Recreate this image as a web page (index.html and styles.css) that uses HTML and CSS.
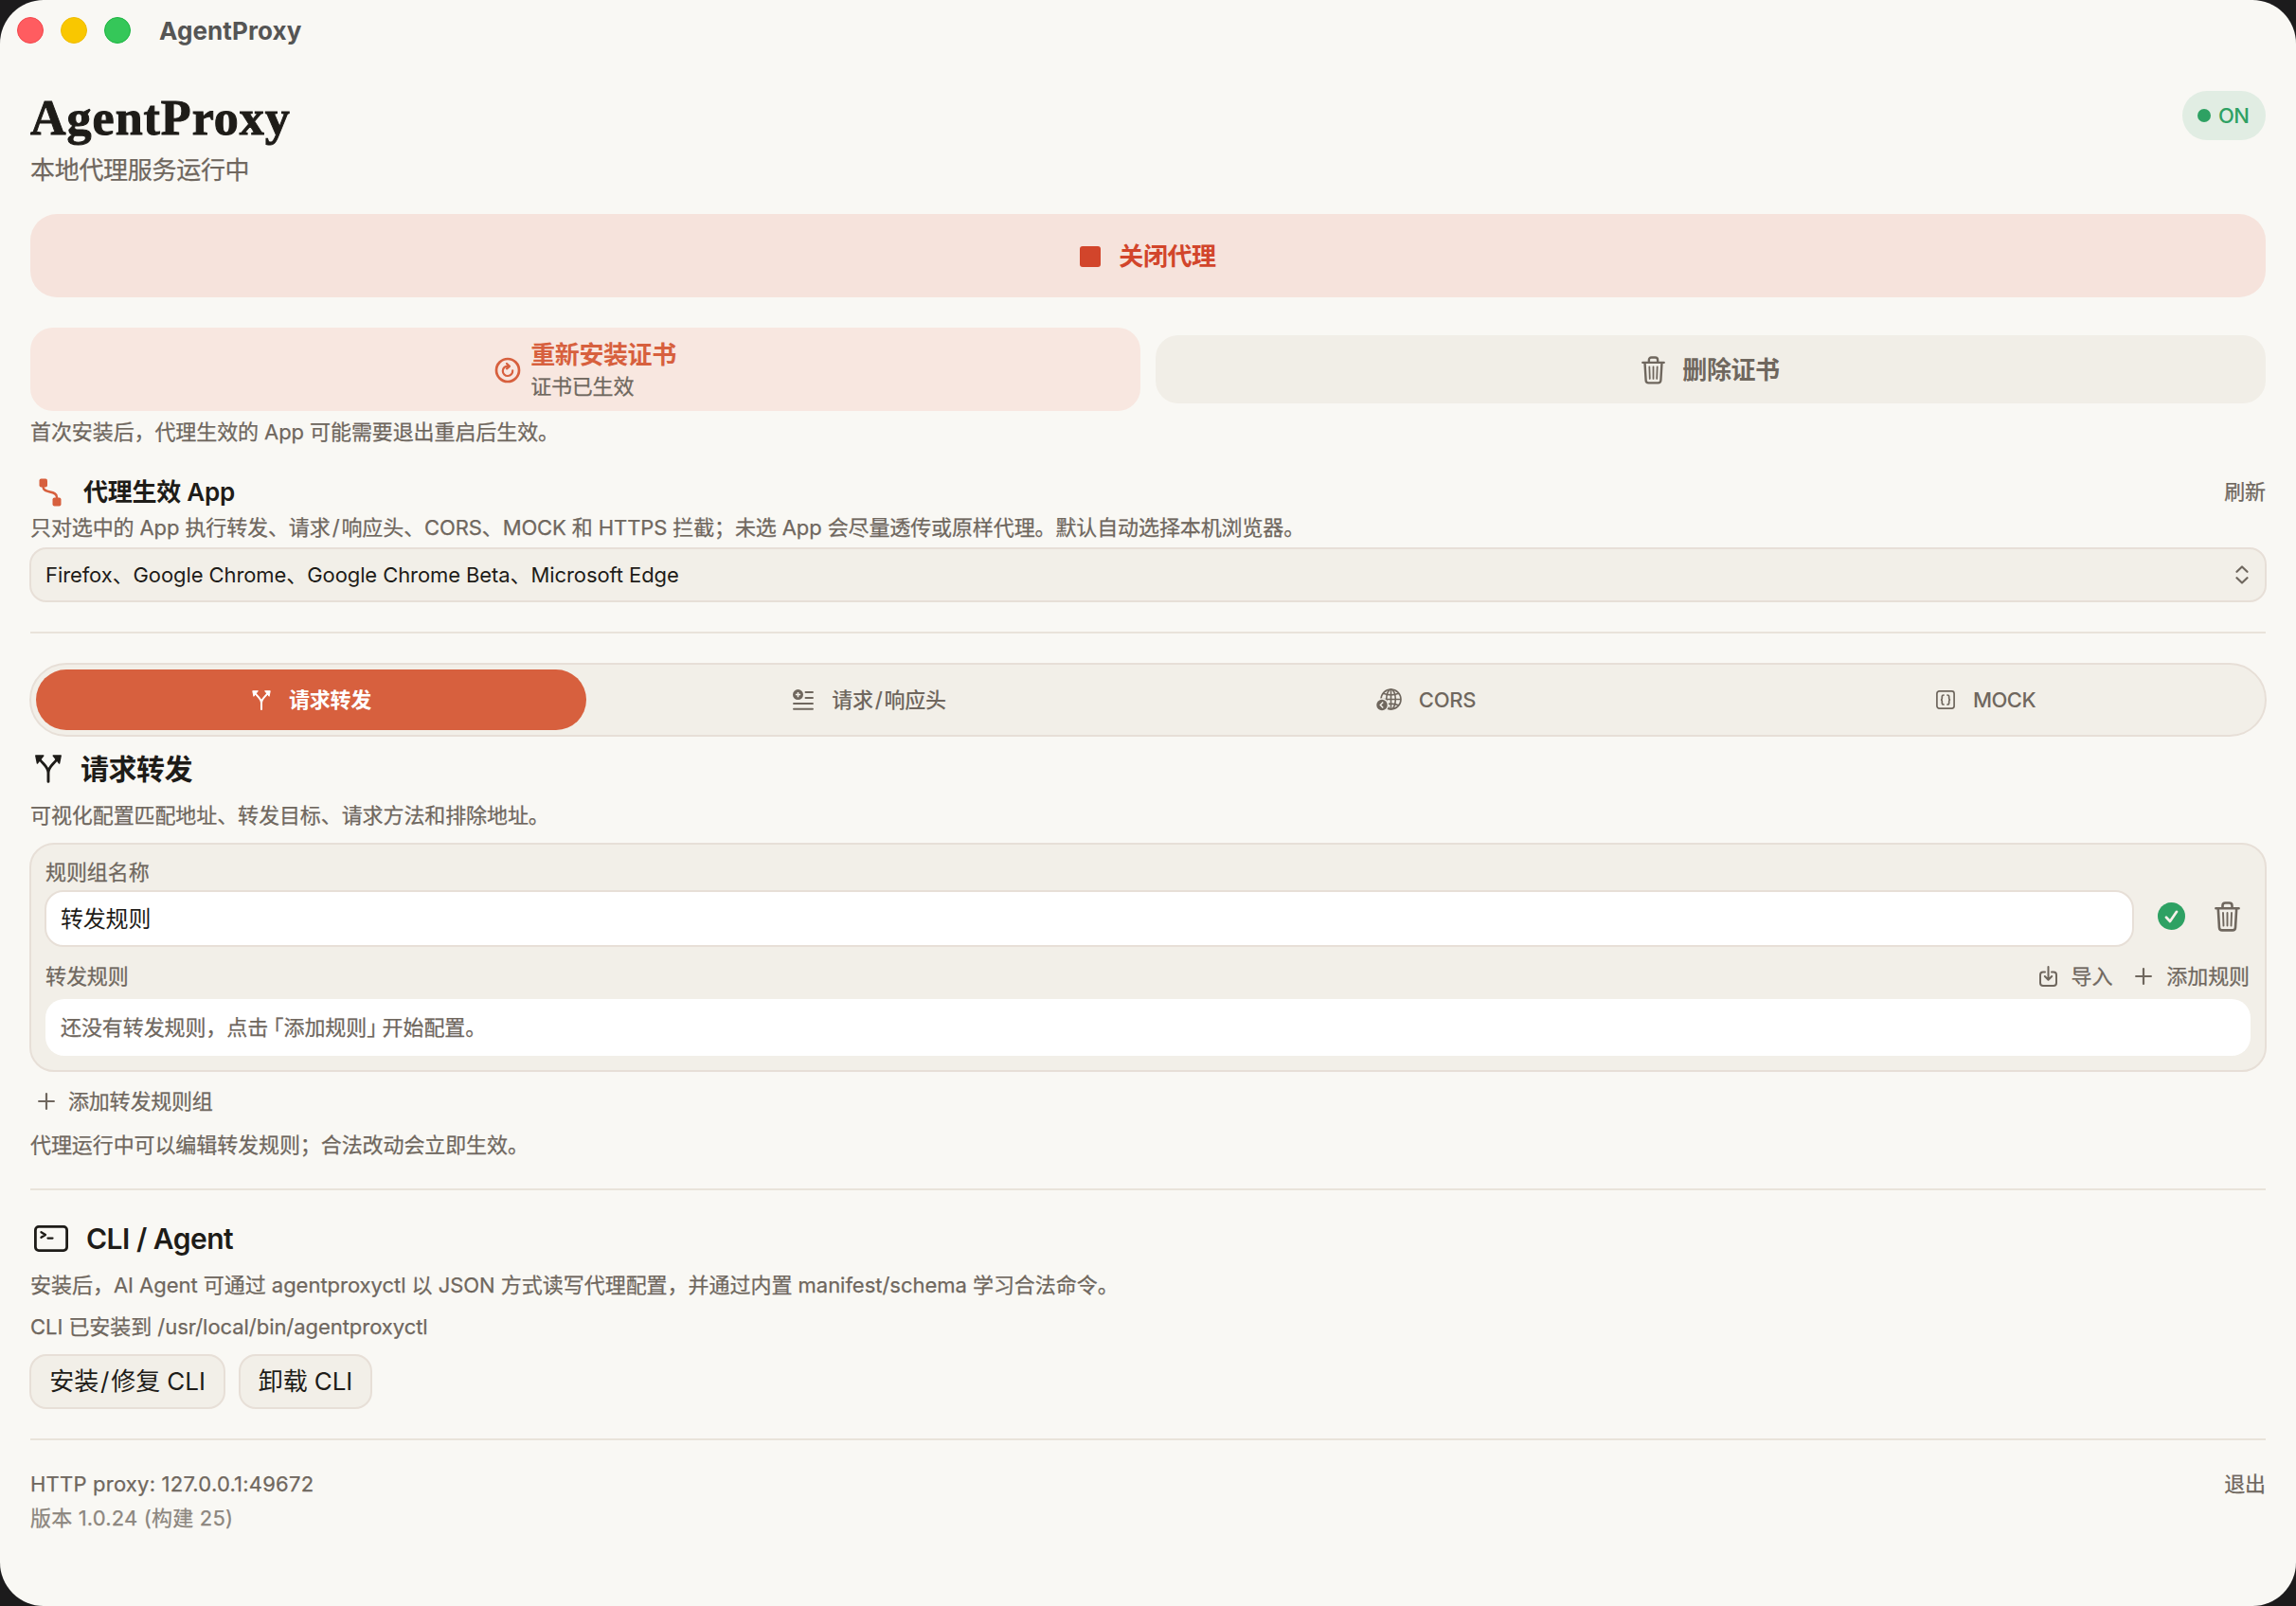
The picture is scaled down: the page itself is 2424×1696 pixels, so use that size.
FILE: index.html
```html
<!DOCTYPE html>
<html lang="zh-CN">
<head>
<meta charset="utf-8">
<title>AgentProxy</title>
<link rel="stylesheet" href="styles.css">
</head>
<body>
<svg class="defs" width="0" height="0" aria-hidden="true">
  <symbol id="trash" viewBox="0 0 27 32">
    <g fill="none" stroke="currentColor" stroke-linecap="round" stroke-linejoin="round">
      <path stroke-width="2.600" d="M1.400 7.200H25.600M8.500 7V4.400Q8.500 1.500 11.400 1.500H15.600Q18.500 1.500 18.500 4.400V7M3.800 7.500L5 27.600Q5.200 30.400 8 30.400H19Q21.800 30.400 22 27.600L23.200 7.500"/>
      <path stroke-width="1.900" d="M9 12L9.500 25.600M13.500 12V25.600M18 12L17.500 25.600"/>
    </g>
  </symbol>
  <symbol id="branch" viewBox="0 0 28 30">
    <path fill="none" stroke="currentColor" stroke-width="2.900" stroke-linecap="round" d="M14 28.400V19C14 13 9 10.500 5 5M14 19C14 13 19 10.500 23 5"/>
    <path fill="currentColor" stroke="currentColor" stroke-width="1.400" stroke-linejoin="round" d="M.8 1H8.800L2.400 9ZM27.200 1H19.200L25.600 9Z"/>
  </symbol>
  <symbol id="plus" viewBox="0 0 18 18">
    <path fill="none" stroke="currentColor" stroke-width="2.200" stroke-linecap="round" d="M9 1.100V16.900M1.100 9H16.900"/>
  </symbol>
</svg>
<main class="window">
  <header class="titlebar">
    <i class="light close"></i><i class="light minimize"></i><i class="light expand"></i>
    <span class="titlebar-name">AgentProxy</span>
  </header>

  <div class="content">
    <section class="hero">
      <div>
        <h1 class="brand">AgentProxy</h1>
        <p class="status">本地代理服务运行中</p>
      </div>
      <span class="pill"><i class="dot"></i>ON</span>
    </section>

    <button class="stop"><i class="square"></i>关闭代理</button>

    <div class="certs">
      <button class="cert install">
        <svg width="28" height="28" viewBox="0 0 28 28" fill="none" stroke="currentColor" stroke-linecap="round" stroke-linejoin="round">
          <circle cx="14" cy="14" r="12" stroke-width="2.700"/>
          <path stroke-width="2.200" d="M14.400 9.600A5.200 5.200 0 1 0 19.200 14.400M13 7L16 9.800L13 12.400"/>
        </svg>
        <span class="cert-text"><b>重新安装证书</b><small>证书已生效</small></span>
      </button>
      <button class="cert remove"><svg width="25" height="30"><use href="#trash"/></svg>删除证书</button>
    </div>
    <p class="text note">首次安装后，代理生效的 App 可能需要退出重启后生效。</p>

    <div class="row apps-head">
      <svg class="route" width="24" height="30" viewBox="0 0 24 30">
        <path fill="none" stroke="currentColor" stroke-width="2.400" d="M4.500 6V9C4.500 17 19 12 19 20V23"/>
        <rect x=".5" y=".5" width="8.500" height="9" rx="2" fill="currentColor"/>
        <rect x="14.500" y="20.500" width="9" height="9" rx="2" fill="currentColor"/>
      </svg>
      <h2 class="h-small">代理生效 App</h2>
      <button class="link end refresh">刷新</button>
    </div>
    <p class="text apps-desc">只对选中的 App 执行转发、请求<span class="slash">/</span>响应头、CORS、MOCK 和 HTTPS 拦截；未选 App 会尽量透传或原样代理。默认自动选择本机浏览器。</p>
    <div class="select">
      <span>Firefox、Google Chrome、Google Chrome Beta、Microsoft Edge</span>
      <svg width="14" height="20" viewBox="0 0 14 20" fill="none" stroke="currentColor" stroke-width="2.200" stroke-linecap="round" stroke-linejoin="round"><path d="M1.500 6.800L7 1.500L12.500 6.800M1.500 13.200L7 18.500L12.500 13.200"/></svg>
    </div>

    <hr class="rule">

    <nav class="tabs">
      <button class="tab active"><svg width="20" height="21"><use href="#branch"/></svg><span>请求转发</span></button>
      <button class="tab">
        <svg width="22" height="22" viewBox="0 0 22 22"><circle cx="5.500" cy="5.600" r="5.500" fill="currentColor"/><path d="M5.500 3V8.200M2.900 5.600H8.100" stroke="#f2efe8" stroke-width="1.500"/><path d="M13.500 3H21M13.500 9H21M1 15H21M1 20.800H21" stroke="currentColor" stroke-width="1.900" stroke-linecap="round"/></svg>
        <span>请求<span class="slash">/</span>响应头</span>
      </button>
      <button class="tab cors">
        <svg width="27" height="24" viewBox="0 0 27 24">
          <g fill="none" stroke="currentColor" stroke-width="1.600"><circle cx="15.500" cy="11.500" r="10.500"/><ellipse cx="15.500" cy="11.500" rx="4.800" ry="10.500"/><path d="M15.500 1V22M5 11.500H26M7.500 5.200Q15.500 8.500 23.500 5.200M7.500 17.800Q15.500 14.500 23.500 17.800"/></g>
          <circle cx="6" cy="17.500" r="7.200" fill="#f2efe8"/><circle cx="6" cy="17.500" r="5.700" fill="currentColor"/>
          <path d="M7.200 14.500L4.300 17.500L7.200 20.500" fill="none" stroke="#f2efe8" stroke-width="1.500"/>
        </svg>
        <span>CORS</span>
      </button>
      <button class="tab mock">
        <svg width="20" height="20" viewBox="0 0 20 20" fill="none" stroke="currentColor" stroke-width="1.700" stroke-linecap="round"><rect x=".9" y=".9" width="18.200" height="18.200" rx="2.600"/><path d="M8 5Q6.300 5 6.300 6.700V8.500Q6.300 10 4.900 10Q6.300 10 6.300 11.500V13.300Q6.300 15 8 15M12 5Q13.700 5 13.700 6.700V8.500Q13.700 10 15.100 10Q13.700 10 13.700 11.500V13.300Q13.700 15 12 15"/></svg>
        <span>MOCK</span>
      </button>
    </nav>

    <div class="row section-head">
      <svg width="28" height="30"><use href="#branch"/></svg>
      <h2 class="h-large">请求转发</h2>
    </div>
    <p class="text section-desc">可视化配置匹配地址、转发目标、请求方法和排除地址。</p>

    <section class="card">
      <p class="text">规则组名称</p>
      <div class="row name-row">
        <div class="input">转发规则</div>
        <svg class="check" width="29" height="29" viewBox="0 0 29 29"><circle cx="14.500" cy="14.500" r="14.500" fill="#2ea163"/><path d="M9 15.800L13 20L20 9.800" fill="none" stroke="#f5f1ea" stroke-width="2.700" stroke-linecap="round" stroke-linejoin="round"/></svg>
        <svg class="bin" width="27" height="32"><use href="#trash"/></svg>
      </div>
      <div class="row rules-head">
        <p class="text">转发规则</p>
        <button class="link end">
          <svg width="19" height="22" viewBox="0 0 19 22" fill="none" stroke="currentColor" stroke-width="2" stroke-linecap="round" stroke-linejoin="round"><path d="M6 6.500H4Q1 6.500 1 9.500V18Q1 21 4 21H15Q18 21 18 18V9.500Q18 6.500 15 6.500H13M9.500 1V14.500M5.800 11L9.500 14.700L13.200 11"/></svg>导入
        </button>
        <button class="link"><svg width="18" height="18"><use href="#plus"/></svg>添加规则</button>
      </div>
      <div class="empty">还没有转发规则，点击<span class="open">「</span>添加规则<span class="shut">」</span>开始配置。</div>
    </section>

    <button class="link add-group"><svg width="18" height="18"><use href="#plus"/></svg>添加转发规则组</button>
    <p class="text live-note">代理运行中可以编辑转发规则；合法改动会立即生效。</p>

    <hr class="rule cli-rule">

    <div class="row cli-head">
      <svg width="36" height="28" viewBox="0 0 36 28" fill="none" stroke="currentColor" stroke-linecap="round" stroke-linejoin="round"><rect x="1.400" y="1.400" width="33.200" height="25.200" rx="3.500" stroke-width="2.800"/><path stroke-width="2.300" d="M7.500 7.200L12 10L7.500 12.800M14.500 13.600H19.500"/></svg>
      <h2 class="h-large cli-title">CLI / Agent</h2>
    </div>
    <p class="text cli-desc">安装后，AI Agent 可通过 agentproxyctl 以 JSON 方式读写代理配置，并通过内置 manifest/schema 学习合法命令。</p>
    <p class="text cli-path">CLI 已安装到 /usr/local/bin/agentproxyctl</p>
    <div class="row cli-actions">
      <button class="outline repair">安装<span class="slash">/</span>修复 CLI</button>
      <button class="outline uninstall">卸载 CLI</button>
    </div>

    <hr class="rule">

    <footer class="row foot">
      <div>
        <p class="text address">HTTP proxy: 127.0.0.1:49672</p>
        <p class="text version">版本 1.0.24 (构建 25)</p>
      </div>
      <button class="link end">退出</button>
    </footer>
  </div>
</main>
</body>
</html>
```
FILE: styles.css
```css
* { box-sizing: border-box; }
body {
  margin: 0;
  background: #1c1b1c;
  color: #1e1c18;
  font-family: Inter, "Noto Sans CJK SC", sans-serif;
  font-size: 22px;
  line-height: 28px;
  letter-spacing: -.09px;
}
h1, h2, p { margin: 0; }
svg { display: block; flex: none; }
button {
  border: 0;
  margin: 0;
  padding: 0;
  background: none;
  color: inherit;
  font: inherit;
  letter-spacing: inherit;
  white-space: nowrap;
}
.defs { position: absolute; }
.window {
  width: 2424px;
  height: 1696px;
  background: #f9f8f4;
  border-radius: 46px;
  overflow: hidden;
}
.titlebar { display: flex; align-items: center; height: 64px; padding-left: 18px; }
.light { width: 28px; height: 28px; margin-right: 18px; border-radius: 50%; border: 1px solid; }
.close { background: #ff5c60; border-color: #f3474c; }
.minimize { background: #f9c700; border-color: #eebb00; }
.expand { background: #35c759; border-color: #1cb540; }
.titlebar-name { margin-left: 12px; padding-top: 2px; font-size: 26px; font-weight: 700; letter-spacing: .1px; color: #555554; }

.content { padding: 0 32px; }
.row { display: flex; align-items: center; }
.text { color: #6f675e; white-space: nowrap; }
.text, .link, .empty, .status, .cert-text small { -webkit-text-stroke: .25px currentColor; }
.end { margin-left: auto; }
.slash { margin: 0 2px; }

.hero { display: flex; justify-content: space-between; height: 162px; padding-top: 32px; }
.brand {
  font: 700 52px/56px "Liberation Serif", serif;
  letter-spacing: 1px;
  padding-top: 1px;
  -webkit-text-stroke: 1px currentColor;
}
.status { margin-top: 11px; font-size: 26px; line-height: 32px; letter-spacing: -.3px; color: #6f675e; }
.pill {
  display: flex;
  align-items: center;
  gap: 8px;
  width: 88px;
  height: 52px;
  padding-left: 16px;
  border-radius: 28px;
  background: #e1ede3;
  color: #2ea163;
  font-weight: 500;
  letter-spacing: -.6px;
}
.dot { width: 14px; height: 14px; border-radius: 50%; background: #2ea163; }

.stop {
  display: flex;
  align-items: center;
  justify-content: center;
  gap: 19px;
  width: 100%;
  height: 88px;
  padding-top: 1px;
  border-radius: 28px;
  background: #f6e3dc;
  color: #d2452b;
  font-size: 26px;
  font-weight: 600;
  letter-spacing: -.4px;
}
.square { width: 22px; height: 22px; border-radius: 3px; background: #d2452b; }

.certs { display: grid; grid-template-columns: 1fr 1fr; gap: 16px; align-items: center; margin-top: 32px; }
.cert { display: flex; align-items: center; justify-content: center; border-radius: 24px; font-size: 26px; font-weight: 600; letter-spacing: -.4px; }
.install { height: 88px; padding-top: 1px; gap: 10px; background: #f8e7e0; color: #d7603e; }
.cert-text { display: flex; flex-direction: column; align-items: flex-start; gap: 3px; }
.cert-text b { font-weight: 600; line-height: 32px; }
.cert-text small { font-size: 22px; font-weight: 400; line-height: 28px; letter-spacing: -.2px; color: #6f675e; }
.remove { height: 72px; padding-top: 2px; gap: 18px; background: #f1eee7; color: #6f675e; }
.note { margin-top: 8px; }

.apps-head { height: 32px; margin-top: 34px; padding-left: 9px; }
.route { color: #d7603e; }
.h-small { margin-left: 23px; font-size: 26px; line-height: 32px; font-weight: 600; letter-spacing: -.25px; }
.refresh { margin-top: -2px; }
.apps-desc { margin-top: 7px; letter-spacing: -.11px; }
.select {
  display: flex;
  align-items: center;
  justify-content: space-between;
  height: 58px;
  margin: 7px -1px 0;
  padding: 0 17px 0 15px;
  border: 2px solid #e7dfd7;
  border-radius: 18px;
  background: #f2efe8;
}
.select svg { color: #6f675e; }
.rule { height: 2px; margin: 31px 0; border: 0; background: #e9e3da; }
.cli-rule { margin-top: 32px; }

.tabs {
  display: grid;
  grid-template-columns: repeat(4, 1fr);
  gap: 8px;
  height: 78px;
  margin: 0 -1px;
  padding: 5px;
  border: 2px solid #e7dfd7;
  border-radius: 39px;
  background: #f2efe8;
}
.tab { display: flex; align-items: center; justify-content: center; gap: 19px; padding-left: 1px; border-radius: 32px; color: #6f675e; font-weight: 500; letter-spacing: -.3px; }
.active { background: #d7603e; color: #fff; font-weight: 600; }
.cors { padding: 0 2px 0 0; gap: 18px; }
.mock { padding-left: 2px; letter-spacing: -.5px; }

.section-head { height: 40px; margin-top: 14px; padding-left: 5px; }
.h-large { margin-left: 20px; font-size: 30px; line-height: 40px; font-weight: 600; letter-spacing: -.5px; }
.section-desc { margin-top: 15px; }

.card {
  height: 242px;
  margin: 15px -1px 0;
  padding: 15px;
  border: 2px solid #e7dfd7;
  border-radius: 26px;
  background: #f2efe8;
}
.name-row { margin: 5px 0 0 -1px; color: #6f675e; }
.input {
  flex: 1;
  height: 60px;
  padding: 0 15px;
  border: 2px solid #e7dfd7;
  border-radius: 20px;
  background: #fff;
  color: #1e1c18;
  font-size: 24px;
  line-height: 58px;
  letter-spacing: -.2px;
}
.check { margin: -5px 0 0 25px; }
.bin { margin: -5px 11px 0 31px; }
.rules-head { height: 28px; margin-top: 17px; padding-right: 1px; gap: 24px; }
.link { display: flex; align-items: center; gap: 15px; color: #6f675e; line-height: 28px; }
.link.end { margin-left: auto; }
.empty { height: 60px; margin-top: 10px; padding: 0 16px; border-radius: 20px; background: #fff; color: #6f675e; line-height: 60px; }
.open, .shut { font-feature-settings: "halt"; }
.open { margin-left: .25em; }
.shut { margin-right: .25em; }
.add-group { margin: 17px 0 0 8px; gap: 14px; letter-spacing: -.2px; }
.live-note { margin-top: 18px; }

.cli-head { height: 40px; padding-left: 4px; }
.cli-title { margin-left: 19px; letter-spacing: -.5px; }
.cli-desc { margin-top: 15px; letter-spacing: -.03px; }
.cli-path { margin-top: 16px; letter-spacing: -.05px; }
.cli-actions { gap: 14px; margin: 15px 0 0 -1px; }
.outline { height: 58px; border: 2px solid #e7dfd7; border-radius: 18px; background: #f2efe8; font-size: 26px; }
.repair { width: 207px; }
.uninstall { width: 141px; }
.foot { align-items: flex-start; margin-top: 32px; }
.address { letter-spacing: .22px; }
.version { margin-top: 8px; letter-spacing: .18px; color: #8c867e; }
```
